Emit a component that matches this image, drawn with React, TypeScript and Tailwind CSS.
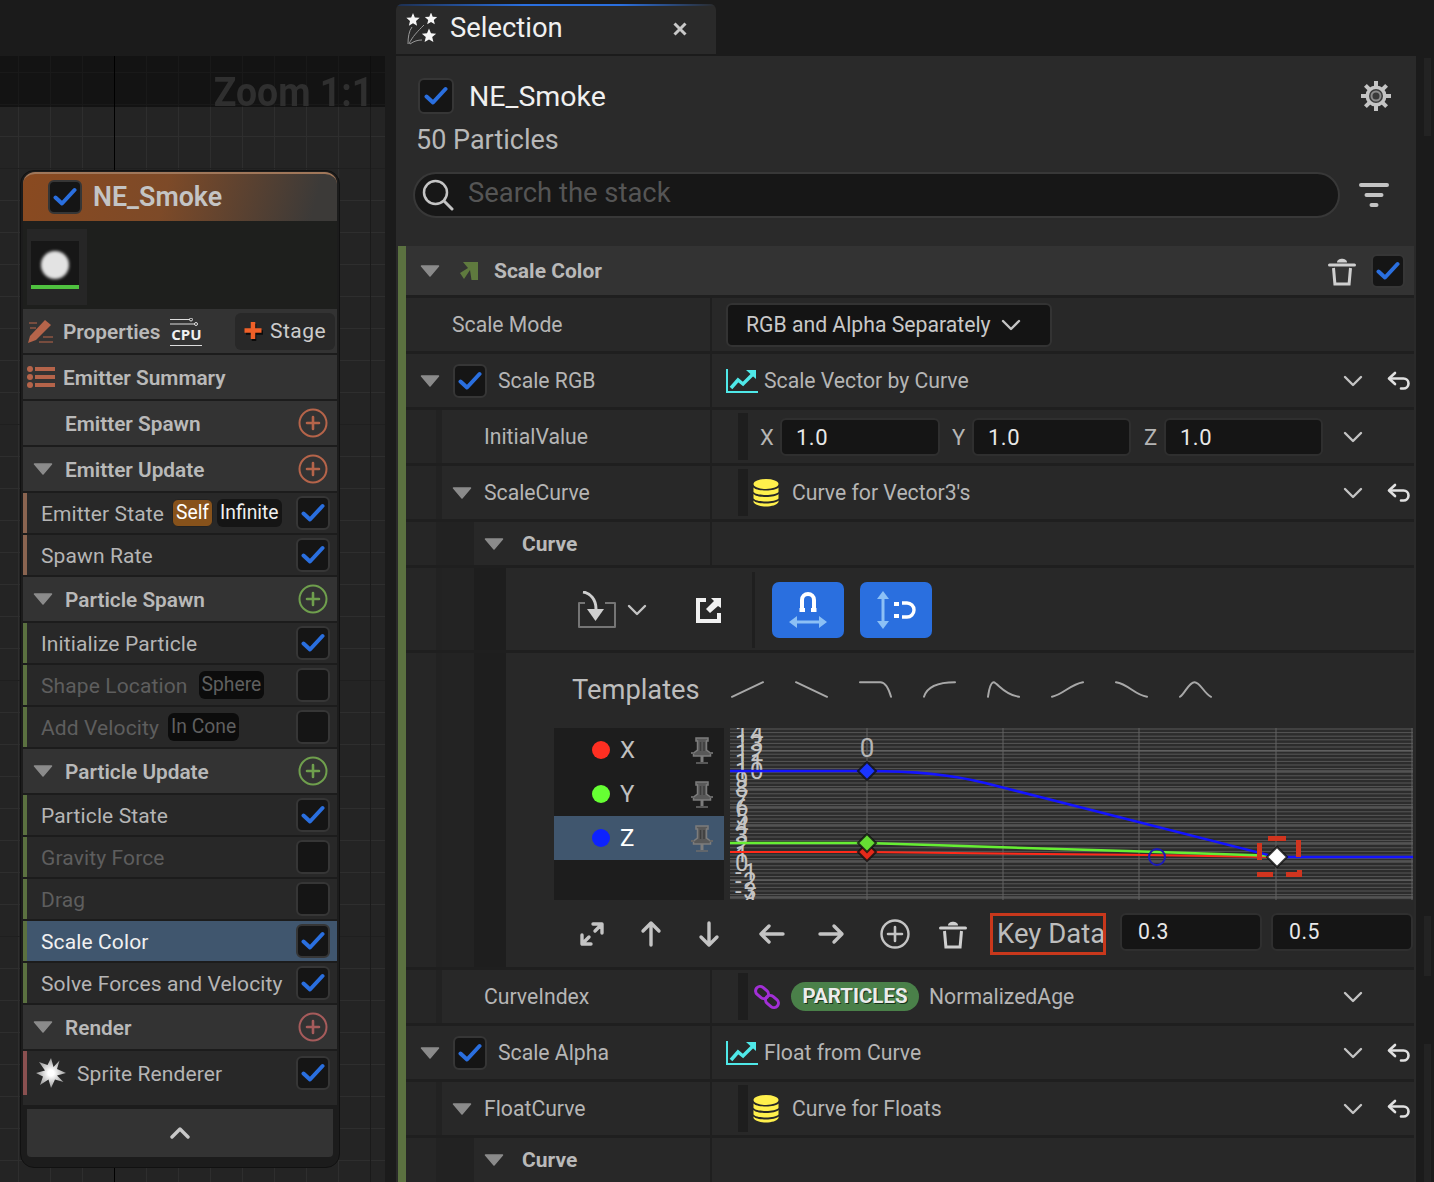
import React from "react";

const ROW_TEXT = "text-[21.2px] text-[#b5b5b5] pt-[1px] whitespace-nowrap";
const BOLD_TEXT = "text-[21px] font-bold text-[#b9b9b9] pt-[2px]";

const Tri = ({ className = "" }: { className?: string }) => (
  <svg width="20" height="12" viewBox="0 0 20 12" className={`shrink-0 ${className}`}>
    <path d="M1.5 1h17L10 11z" fill="#8b8b8b" stroke="#8b8b8b" strokeWidth="1.5" strokeLinejoin="round" />
  </svg>
);

const Check = ({ checked = true, size = 34 }: { checked?: boolean; size?: number }) => (
  <div
    className="shrink-0 flex items-center justify-center rounded-[6px] bg-[#151515] border-2 border-[#363636]"
    style={{ width: size, height: size }}
  >
    {checked && (
      <svg width="24" height="20" viewBox="0 0 24 20">
        <path d="M2.5 10.500l6.500 6L21.500 3" fill="none" stroke="#2a6fdf" strokeWidth="4" strokeLinecap="round" strokeLinejoin="round" />
      </svg>
    )}
  </div>
);

const PlusCircle = ({ color }: { color: string }) => (
  <svg width="30" height="30" viewBox="0 0 30 30" className="shrink-0">
    <circle cx="15" cy="15" r="13.500" fill="none" stroke={color} strokeWidth="2" />
    <path d="M15 9v12M9 15h12" stroke={color} strokeWidth="2.600" strokeLinecap="round" />
  </svg>
);

const Chevron = () => (
  <svg width="20" height="12" viewBox="0 0 20 12" className="shrink-0">
    <path d="M2 2l8 8 8-8" fill="none" stroke="#c4c4c4" strokeWidth="2.400" strokeLinecap="round" strokeLinejoin="round" />
  </svg>
);

const Undo = () => (
  <svg width="24" height="20" viewBox="0 0 24 20" className="shrink-0">
    <path d="M8 2L2 7.500 8 13" fill="none" stroke="#e0e0e0" strokeWidth="2.600" strokeLinecap="round" strokeLinejoin="round" />
    <path d="M3 7.500h13.500a4.800 4.800 0 0 1 0 10h-2.500" fill="none" stroke="#e0e0e0" strokeWidth="2.600" strokeLinecap="round" />
  </svg>
);

const Trash = () => (
  <svg width="28" height="30" viewBox="0 0 28 30" className="shrink-0">
    <path d="M1.500 9h25" stroke="#cfcfcf" strokeWidth="3" strokeLinecap="round" />
    <path d="M9 6.500c0-5 10-5 10 0z" fill="#cfcfcf" />
    <path d="M5.500 12l1.400 16h14.200l1.400-16" fill="none" stroke="#cfcfcf" strokeWidth="3" />
  </svg>
);

const CurveIcon = () => (
  <svg width="32" height="24" viewBox="0 0 32 24" className="shrink-0">
    <path d="M1 0v23h31" fill="none" stroke="#4fe8e8" strokeWidth="2" />
    <path d="M5 19l7-8 5 4L27 5" fill="none" stroke="#4fe8e8" strokeWidth="3.500" />
    <path d="M20 1h10v9z" fill="#4fe8e8" />
  </svg>
);

const Db = () => (
  <svg width="26" height="28" viewBox="0 0 26 28" className="shrink-0">
    <ellipse cx="13" cy="5" rx="12.500" ry="5" fill="#fff04c" />
    <path d="M.5 8.500c3 4 22 4 25 0v4.500c-3 4-22 4-25 0z" fill="#fff04c" />
    <path d="M.5 15c3 4 22 4 25 0v4.500c-3 4-22 4-25 0z" fill="#fff04c" />
    <path d="M.5 21.500c3 4 22 4 25 0v1.500c-3 6-22 6-25 0z" fill="#fff04c" />
  </svg>
);

const StripValue = () => <div className="w-[10px] h-[47px] shrink-0 ml-[26px] mr-[5px] bg-[#1e1e1e]" />;

const Row = ({
  indent = 0,
  left,
  right,
  h = "h-[53px]",
}: {
  indent?: number;
  left: React.ReactNode;
  right?: React.ReactNode;
  h?: string;
}) => (
  <div className={`flex ${h} bg-[#282828]`}>
    <div className="w-[304px] flex items-center shrink-0 bg-[#282828]">
      {indent > 0 && <div className="self-stretch w-[30px] bg-[#262626] shrink-0" />}
      {indent > 0 && <div className="self-stretch w-[6px] bg-[#222222] shrink-0" />}
      {indent > 1 && <div className="self-stretch w-[32px] bg-[#222222] shrink-0" />}
      {left}
    </div>
    <div className="w-[2px] bg-[#1f1f1f] shrink-0" />
    <div className="flex-1 flex items-center min-w-0">{right}</div>
  </div>
);

const Tail = ({ undo = false }: { undo?: boolean }) => (
  <div className="ml-auto flex items-center gap-[24px] pr-[3px]">
    <Chevron />
    <div className="w-[24px] flex justify-center">{undo && <Undo />}</div>
  </div>
);

const Vec = ({ l, w }: { l: string; w: string }) => (
  <>
    <span className="text-[#b5b5b5] text-[22px] w-[20px] shrink-0 pt-[1px]">{l}</span>
    <div className={`${w} h-[38px] shrink-0 flex items-center pl-[14px] bg-[#151515] border-2 border-[#2f2f2f] rounded-[6px] text-[22px] text-[#e8e8e8] tracking-[0.5px] pt-[1px]`}>
      1.0
    </div>
  </>
);

const Blue = ({ children }: { children: React.ReactNode }) => (
  <div className="w-[72px] h-[56px] rounded-[7px] bg-[#2a6fdf] flex items-center justify-center shrink-0">{children}</div>
);

function Graph() {
  const minor = Array.from({ length: 48 }, (_, i) => 729 + i * 3.6);
  const major = [751, 771, 789, 807, 825, 843, 861, 880, 897];
  const vs = [867, 1003, 1139, 1276, 1412];
  const labels = Array.from({ length: 19 }, (_, i) => 14 - i);
  const dia = (x: number, y: number, f: string, r = 9) => (
    <path d={`M${x} ${y - r}L${x + r} ${y}L${x} ${y + r}L${x - r} ${y}z`} fill={f} stroke="#101010" strokeWidth="2" strokeOpacity="0.8" />
  );
  return (
    <svg width="683" height="172" viewBox="730 728 683 172" className="block [font-family:Roboto,sans-serif]">
      <rect x="730" y="728" width="683" height="172" fill="#2c2c2c" />
      {minor.map((y) => (
        <line key={y} x1="730" x2="1413" y1={y} y2={y} stroke="#575757" strokeWidth="1" />
      ))}
      {major.map((y) => (
        <line key={y} x1="730" x2="1413" y1={y} y2={y} stroke="#6e6e6e" strokeWidth="1" />
      ))}
      {vs.map((x) => (
        <line key={x} x1={x} x2={x} y1="728" y2="900" stroke="#626262" strokeWidth="1" />
      ))}
      {labels.map((n) => (
        <text key={n} x="735" y={871 - n * 9.2} fontSize="24" letterSpacing="1.5" fill="#c4c4c4">
          {n}
        </text>
      ))}
      <text x="867" y="757" fontSize="26" fill="#b5b5b5" textAnchor="middle">0</text>
      <path d="M730 852H867C1000 853 1140 855 1276 857" fill="none" stroke="#ff2a1a" strokeWidth="2" />
      <path d="M730 843H867C1000 846 1140 852 1276 856" fill="none" stroke="#66ee33" strokeWidth="2.500" />
      <path d="M730 771H867C915 771 950 774 985 783L1276 857H1413" fill="none" stroke="#1414ff" strokeWidth="2.500" />
      {dia(867, 852, "#e62a1a")}
      {dia(867, 843, "#66dd33")}
      {dia(867, 771, "#1a35ff")}
      <circle cx="1157" cy="857" r="8" fill="none" stroke="#1a1ab8" strokeWidth="2" />
      {dia(1277, 857, "#ffffff", 10)}
      <g fill="#d1351f">
        <rect x="1268" y="836" width="18" height="5" />
        <rect x="1257" y="843" width="5" height="17" />
        <rect x="1296" y="840" width="5" height="17" />
        <rect x="1257" y="872" width="16" height="5" />
        <rect x="1286" y="872" width="16" height="5" />
        <rect x="1297" y="870" width="5" height="4" />
      </g>
    </svg>
  );
}

const Pin = () => (
  <svg width="22" height="27" viewBox="0 0 22 27" className="shrink-0">
    <path d="M5 1h12v3h-1.500v9l4 3v3H2.500v-3l4-3V4H5z" fill="#585858" stroke="#7c7c7c" strokeWidth="1.500" />
    <path d="M9.500 5v9M13 5v9" stroke="#3c3c3c" strokeWidth="1.500" />
    <path d="M11 19v6" stroke="#7c7c7c" strokeWidth="3" />
    <path d="M5 26h12" stroke="#6c6c6c" strokeWidth="1.500" />
    <path d="M0 16h3M19 16h3" stroke="#666" strokeWidth="2" />
  </svg>
);

const Legend = ({ c, l, sel = false }: { c: string; l: string; sel?: boolean }) => (
  <div className={`h-[44px] flex items-center pl-[38px] pr-[11px] ${sel ? "bg-[#40566e]" : ""}`}>
    <div className="w-[18px] h-[18px] rounded-full" style={{ background: c }} />
    <span className={`ml-[10px] text-[24px] ${sel ? "text-white" : "text-[#c0c0c0]"}`}>{l}</span>
    <div className="ml-auto">
      <Pin />
    </div>
  </div>
);

const templates = [
  "M1 17L33 2",
  "M1 2L33 17",
  "M1 2H22C28 2 31 10 33 17",
  "M1 17C4 7 14 2 33 2",
  "M1 17C2 10 4 2 7 2C12 4 18 15 33 17",
  "M1 17C12 15 20 4 33 2",
  "M1 2C14 4 20 15 33 17",
  "M1 17C6 14 10 2 16 2C22 2 26 14 33 17",
];

const Arrow = ({ d }: { d: string }) => (
  <svg width="30" height="30" viewBox="0 0 30 30" className="shrink-0">
    <path d={d} fill="none" stroke="#c4c4c4" strokeWidth="3.400" strokeLinecap="round" strokeLinejoin="round" />
  </svg>
);

function Stack() {
  return (
    <div className="flex flex-col gap-[3px] flex-1 bg-[#1f1f1f] min-w-0">
      <div className="h-[49px] flex items-center bg-[#333333] pl-[14px]">
        <Tri />
        <svg width="20" height="20" viewBox="0 0 20 20" className="ml-[19px]">
          <path d="M4 1H19V19H12.500L11 9L5 18L1 12L9 7Z" fill="#5f7a3e" />
        </svg>
        <span className={`ml-[15px] ${BOLD_TEXT}`}>Scale Color</span>
        <div className="ml-auto flex items-center gap-[15px] pr-[9px]">
          <Trash />
          <Check />
        </div>
      </div>

      <Row
        left={<span className={`ml-[46px] ${ROW_TEXT}`}>Scale Mode</span>}
        right={
          <div className="ml-[14px] w-[326px] h-[44px] bg-[#141414] border-2 border-[#333333] rounded-[6px] flex items-center pl-[18px] text-[21.2px] text-[#c8c8c8] pt-[1px]">
            RGB and Alpha Separately
            <div className="ml-[10px]">
              <Chevron />
            </div>
          </div>
        }
      />
      <Row
        left={
          <>
            <Tri className="ml-[14px]" />
            <div className="ml-[13px]">
              <Check />
            </div>
            <span className={`ml-[11px] ${ROW_TEXT}`}>Scale RGB</span>
          </>
        }
        right={
          <>
            <div className="ml-[14px]">
              <CurveIcon />
            </div>
            <span className={`ml-[6px] ${ROW_TEXT}`}>Scale Vector by Curve</span>
            <Tail undo />
          </>
        }
      />
      <Row
        indent={1}
        left={<span className={`ml-[42px] ${ROW_TEXT}`}>InitialValue</span>}
        right={
          <>
            <StripValue />
            <div className="ml-[7px] flex items-center">
              <Vec l="X" w="w-[160px]" />
              <div className="w-[12px]" />
              <Vec l="Y" w="w-[159px]" />
              <div className="w-[13px]" />
              <Vec l="Z" w="w-[159px]" />
            </div>
            <Tail />
          </>
        }
      />
      <Row
        indent={1}
        left={
          <>
            <Tri className="ml-[10px]" />
            <span className={`ml-[12px] ${ROW_TEXT}`}>ScaleCurve</span>
          </>
        }
        right={
          <>
            <StripValue />
            <Db />
            <span className={`ml-[13px] ${ROW_TEXT}`}>Curve for Vector3's</span>
            <Tail undo />
          </>
        }
      />
      <Row
        indent={2}
        h="h-[43px]"
        left={
          <>
            <Tri className="ml-[10px]" />
            <span className={`ml-[18px] ${BOLD_TEXT}`}>Curve</span>
          </>
        }
      />

      <div className="flex h-[82px] bg-[#282828]">
        <div className="w-[30px] bg-[#262626]" />
        <div className="w-[6px] bg-[#222222]" />
        <div className="w-[32px] bg-[#232323]" />
        <div className="w-[32px] bg-[#1e1e1e]" />
        <div className="flex items-center flex-1 pt-[2px]">
          <svg width="40" height="38" viewBox="0 0 40 38" className="ml-[71px]">
            <path d="M8 12H2v24h36V12h-10" fill="none" stroke="#757575" strokeWidth="2" strokeLinejoin="round" />
            <path d="M6 1c7 1 13 7 13 17" fill="none" stroke="#cfcfcf" strokeWidth="3" />
            <path d="M10 18h17l-8.500 12z" fill="#cfcfcf" />
          </svg>
          <div className="ml-[10px]">
            <Chevron />
          </div>
          <svg width="26" height="26" viewBox="0 0 26 26" className="ml-[49px]">
            <path d="M10 3H2v21h21v-8" fill="none" stroke="#f0f0f0" strokeWidth="4" />
            <path d="M15 1h10v10l-3-2-8 7-4-4 8-8z" fill="#f0f0f0" />
          </svg>
          <div className="w-[3px] h-[76px] bg-[#1f1f1f] ml-[30px]" />
          <div className="ml-[17px]">
            <Blue>
              <svg width="40" height="38" viewBox="0 0 40 38">
                <path d="M14 18V9a6 6 0 0 1 12 0v9" fill="none" stroke="#fff" strokeWidth="4" />
                <path d="M11.500 17h5.500v4h-5.500zM23 17h5.500v4h-5.500z" fill="#fff" />
                <path d="M6 31h28" stroke="#8cc0f5" strokeWidth="3" />
                <path d="M1 31l8-6v12zM39 31l-8-6v12z" fill="#8cc0f5" />
              </svg>
            </Blue>
          </div>
          <div className="ml-[16px]">
            <Blue>
              <svg width="40" height="40" viewBox="0 0 40 40">
                <path d="M7 6v28" stroke="#8cc0f5" strokeWidth="3" />
                <path d="M7 1l6 8H1zM7 39l6-8H1z" fill="#8cc0f5" />
                <path d="M26 13h5a7 7 0 0 1 0 14h-5" fill="none" stroke="#fff" strokeWidth="3.400" />
                <path d="M18 12h5v4h-5zM18 24h5v4h-5z" fill="#fff" />
              </svg>
            </Blue>
          </div>
        </div>
      </div>

      <div className="flex h-[314px] bg-[#282828]">
        <div className="w-[30px] bg-[#262626]" />
        <div className="w-[6px] bg-[#222222]" />
        <div className="w-[32px] bg-[#232323]" />
        <div className="w-[32px] bg-[#1e1e1e]" />
        <div className="flex-1 flex flex-col min-w-0">
          <div className="h-[75px] flex items-center pl-[66px] pb-[3px]">
            <span className="text-[27.3px] text-[#bdbdbd] w-[159px] pt-[3px]">Templates</span>
            {templates.map((d, i) => (
              <svg key={i} width="33" height="19" viewBox="0 0 34 19" className="mr-[31px] shrink-0">
                <path d={d} fill="none" stroke="#a8a8a8" strokeWidth="2" strokeLinecap="round" />
              </svg>
            ))}
          </div>
          <div className="flex ml-[48px]">
            <div className="w-[170px] h-[172px] bg-[#1d1d1d] shrink-0">
              <Legend c="#ff2f22" l="X" />
              <Legend c="#66ff33" l="Y" />
              <Legend c="#0d22ff" l="Z" sel />
            </div>
            <div className="ml-[6px]">
              <Graph />
            </div>
          </div>
          <div className="flex items-center h-[36px] mt-[14px]">
            <div className="flex items-center mt-[4px]">
              <div className="ml-[71px] w-[30px]">
                <Arrow d="M5 25L12 18M18 12L25 5M16 5h9v9M5 16v9h9" />
              </div>
              <div className="ml-[29px]">
                <Arrow d="M15 26V4M7 12l8-8 8 8" />
              </div>
              <div className="ml-[28px]">
                <Arrow d="M15 4v22M7 18l8 8 8-8" />
              </div>
              <div className="ml-[33px]">
                <Arrow d="M26 15H4M12 7l-8 8 8 8" />
              </div>
              <div className="ml-[29px]">
                <Arrow d="M4 15h22M18 7l8 8-8 8" />
              </div>
              <svg width="30" height="30" viewBox="0 0 30 30" className="ml-[34px]">
                <circle cx="15" cy="15" r="13.500" fill="none" stroke="#c4c4c4" strokeWidth="2.400" />
                <path d="M15 8v14M8 15h14" stroke="#c4c4c4" strokeWidth="2.600" strokeLinecap="round" />
              </svg>
              <div className="ml-[29px]">
                <Trash />
              </div>
              <div className="ml-[23px] w-[116px] h-[42px] border-[3px] border-[#c8381c] flex items-center pl-[4px] text-[27.5px] text-[#bdbdbd] whitespace-nowrap overflow-hidden">
                Key Data
              </div>
            </div>
            <div className="ml-[14px] w-[142px] h-[38px] bg-[#151515] border-2 border-[#2f2f2f] rounded-[6px] flex items-center pl-[16px] text-[21.2px] text-[#e8e8e8] tracking-[0.5px]">
              0.3
            </div>
            <div className="ml-[9px] w-[142px] h-[38px] bg-[#151515] border-2 border-[#2f2f2f] rounded-[6px] flex items-center pl-[16px] text-[21.2px] text-[#e8e8e8] tracking-[0.5px]">
              0.5
            </div>
          </div>
        </div>
      </div>

      <Row
        indent={1}
        left={<span className={`ml-[42px] ${ROW_TEXT}`}>CurveIndex</span>}
        right={
          <>
            <StripValue />
            <svg width="26" height="26" viewBox="0 0 26 26" className="ml-[1px]">
              <rect x="1" y="4" width="14" height="9" rx="4.500" transform="rotate(40 8 8.500)" fill="none" stroke="#a22fd6" strokeWidth="3" />
              <rect x="11" y="13" width="14" height="9" rx="4.500" transform="rotate(40 18 17.500)" fill="none" stroke="#a22fd6" strokeWidth="3" />
            </svg>
            <div className="ml-[11px] w-[128px] h-[29px] rounded-full bg-[#4a8049] flex items-center justify-center text-[20.5px] font-bold text-[#ececec] [text-shadow:1px_1px_0_#16331a]">
              PARTICLES
            </div>
            <span className={`ml-[10px] ${ROW_TEXT}`}>NormalizedAge</span>
            <Tail />
          </>
        }
      />
      <Row
        left={
          <>
            <Tri className="ml-[14px]" />
            <div className="ml-[13px]">
              <Check />
            </div>
            <span className={`ml-[11px] ${ROW_TEXT}`}>Scale Alpha</span>
          </>
        }
        right={
          <>
            <div className="ml-[14px]">
              <CurveIcon />
            </div>
            <span className={`ml-[6px] ${ROW_TEXT}`}>Float from Curve</span>
            <Tail undo />
          </>
        }
      />
      <Row
        indent={1}
        left={
          <>
            <Tri className="ml-[10px]" />
            <span className={`ml-[12px] ${ROW_TEXT}`}>FloatCurve</span>
          </>
        }
        right={
          <>
            <StripValue />
            <Db />
            <span className={`ml-[13px] ${ROW_TEXT}`}>Curve for Floats</span>
            <Tail undo />
          </>
        }
      />
      <Row
        indent={2}
        h="h-[44px]"
        left={
          <>
            <Tri className="ml-[10px]" />
            <span className={`ml-[18px] ${BOLD_TEXT}`}>Curve</span>
          </>
        }
      />
    </div>
  );
}

const HeadRow = ({
  label,
  color,
  tri = true,
}: {
  label: string;
  color: string;
  tri?: boolean;
}) => (
  <div className="h-[44px] flex items-center bg-[#333333] pl-[10px] pr-[9px]">
    {tri ? <Tri /> : <div className="w-[20px]" />}
    <span className="ml-[12px] text-[20.8px] font-semibold text-[#b9b9b9] pt-[3px]">{label}</span>
    <div className="ml-auto">
      <PlusCircle color={color} />
    </div>
  </div>
);

const Chip = ({ t, dim = false, self = false }: { t: string; dim?: boolean; self?: boolean }) => (
  <span
    className={`h-[28px] flex items-center px-[3px] rounded-[6px] text-[19.3px] ${
      self ? "bg-[#87521b] text-white border border-[#222222]" : dim ? "bg-[#0c0c0c] text-[#5f5f5f]" : "bg-[#151515] text-[#f0f0f0]"
    }`}
  >
    {t}
  </span>
);

const ModRow = ({
  label,
  bar,
  on = true,
  sel = false,
  children,
  icon,
  h = "h-[40px]",
}: {
  label: string;
  bar: string;
  on?: boolean;
  sel?: boolean;
  children?: React.ReactNode;
  icon?: React.ReactNode;
  h?: string;
}) => (
  <div className={`${h} flex items-center ${sel ? "bg-[#40566e]" : "bg-[#282828]"} pr-[7px]`}>
    <div className="w-[4px] self-stretch shrink-0" style={{ background: bar }} />
    {icon ?? <div className="w-[14px]" />}
    <span className={`text-[21px] tracking-[0.12px] pt-[3px] whitespace-nowrap ${sel ? "text-[#f0f0f0]" : on ? "text-[#b5b5b5]" : "text-[#5e5e5e]"}`}>{label}</span>
    {children}
    <div className="ml-auto">
      <Check checked={on} />
    </div>
  </div>
);

const EM = "#8a6450";
const PA = "#5b7140";
const RE = "#8a5050";

function Node() {
  return (
    <div className="absolute left-[20px] top-[114px] w-[320px] h-[998px] rounded-[14px] bg-[#1c1c1c] border border-[#111111] px-[2px] pt-[1px] flex flex-col gap-[2px] [font-family:Roboto,sans-serif] overflow-hidden">
      <div className="h-[49px] rounded-t-[12px] shrink-0 flex items-center pl-[25px] pb-[1px] bg-[linear-gradient(105deg,#8a4a20_0%,#7d4a28_45%,#3c3a38_92%)] border-t-2 border-[#a0775a]">
        <Check />
        <span className="ml-[11px] text-[26.8px] font-semibold text-[#c4c4c4]">NE_Smoke</span>
      </div>
      <div className="h-[88px] -mt-[2px] shrink-0 bg-[#1e1f1d] pl-[4px] pt-[8px]">
        <div className="w-[60px] h-[76px] bg-[#262626] pl-[4px] pt-[12px]">
          <div className="w-[48px] h-[48px] bg-[#171717] flex flex-col items-center relative">
            <div className="w-[28px] h-[28px] rounded-full mt-[10px] bg-[#e3e3e3] blur-[1.5px]" />
            <div className="absolute bottom-0 w-full h-[4px] bg-[#4fc13f]" />
          </div>
        </div>
      </div>
      <div className="h-[44px] -mt-[2px] shrink-0 flex items-center bg-[#333333] pl-[4px] pr-[2px]">
        <svg width="28" height="28" viewBox="0 0 28 28" className="shrink-0">
          <path d="M1 26l2-7L18 3l6 5L9 23z" fill="#b5644a" />
          <path d="M2 6h8M3 11h6M16 20h10M12 25h14" stroke="#b5644a" strokeWidth="1.500" opacity="0.7" />
        </svg>
        <span className="ml-[8px] text-[20.8px] font-semibold text-[#b9b9b9] pt-[3px]">Properties</span>
        <div className="ml-[10px] w-[32px] flex flex-col items-center pt-[2px]">
          <svg width="32" height="9" viewBox="0 0 32 9" className="block">
            <path d="M0 1.500h20M0 6h25" stroke="#ddd" strokeWidth="1.200" />
            <circle cx="21" cy="1.500" r="1.500" fill="none" stroke="#ddd" />
            <circle cx="26" cy="6" r="1.500" fill="none" stroke="#ddd" />
          </svg>
          <span className="text-[15px] leading-[15px] font-bold text-[#f0f0f0] [font-family:'Open_Sans',sans-serif]">CPU</span>
          <div className="w-full h-[1px] bg-[#ddd] mt-[3px]" />
        </div>
        <div className="ml-auto w-[100px] h-[37px] bg-[#282828] rounded-[6px] flex items-center pl-[8px]">
          <svg width="21" height="21" viewBox="0 0 21 21">
            <path d="M11 3v17M3 11.500h17" stroke="#000" strokeWidth="4.500" opacity="0.7" />
            <path d="M10 1v17M1.500 9.500h17" stroke="#f06028" strokeWidth="4.500" />
          </svg>
          <span className="ml-[6px] text-[21px] text-[#cccccc] tracking-[0.5px] pt-[2px]">Stage</span>
        </div>
      </div>
      <div className="h-[44px] shrink-0 flex items-center bg-[#333333] pl-[4px]">
        <svg width="28" height="22" viewBox="0 0 28 22" className="shrink-0">
          <g fill="#b5644a">
            <circle cx="3" cy="3" r="3" />
            <circle cx="3" cy="11" r="3" />
            <circle cx="3" cy="19" r="3" />
            <rect x="8" y="1" width="20" height="4" />
            <rect x="8" y="9" width="20" height="4" />
            <rect x="8" y="17" width="20" height="4" />
          </g>
        </svg>
        <span className="ml-[8px] text-[20.8px] font-semibold text-[#b9b9b9] pt-[3px]">Emitter Summary</span>
      </div>
      <HeadRow label="Emitter Spawn" color="#b5644a" tri={false} />
      <HeadRow label="Emitter Update" color="#b5644a" />
      <ModRow label="Emitter State" bar={EM}>
        <span className="ml-[8px] flex gap-[4px]">
          <Chip t="Self" self />
          <Chip t="Infinite" />
        </span>
      </ModRow>
      <ModRow label="Spawn Rate" bar={EM} />
      <HeadRow label="Particle Spawn" color="#6f9f4d" />
      <ModRow label="Initialize Particle" bar={PA} />
      <ModRow label="Shape Location" bar={PA} on={false}>
        <span className="ml-[11px]">
          <Chip t="Sphere" dim />
        </span>
      </ModRow>
      <ModRow label="Add Velocity" bar={PA} on={false}>
        <span className="ml-[9px]">
          <Chip t="In Cone" dim />
        </span>
      </ModRow>
      <HeadRow label="Particle Update" color="#6f9f4d" />
      <ModRow label="Particle State" bar={PA} />
      <ModRow label="Gravity Force" bar={PA} on={false} />
      <ModRow label="Drag" bar={PA} on={false} />
      <ModRow label="Scale Color" bar={PA} sel />
      <ModRow label="Solve Forces and Velocity" bar={PA} />
      <HeadRow label="Render" color="#a65b5b" />
      <ModRow
        label="Sprite Renderer"
        bar={RE}
        h="h-[44px]"
        icon={
          <svg width="32" height="32" viewBox="0 0 32 32" className="ml-[8px] mr-[10px] shrink-0">
            <defs>
              <radialGradient id="sp">
                <stop offset="0.2" stopColor="#fff" />
                <stop offset="1" stopColor="#999" />
              </radialGradient>
            </defs>
            <path
              d="M16 1l2.500 9 6-6.500-2.500 8.500L31 16l-9 2.500 6.500 6.500-8.500-2.500L16 31l-2.500-8.500L5 28l3-8.500L1 16l9-2.500L4 5l8.500 3z"
              fill="url(#sp)"
            />
          </svg>
        }
      />
      <div className="h-[10px] -mt-[2px] shrink-0 bg-[#282828]" />
      <div className="mx-[4px] mt-[2px] h-[48px] shrink-0 bg-[#333333] rounded-b-[4px] flex items-center justify-center">
        <svg width="20" height="12" viewBox="0 0 20 12">
          <path d="M2 10l8-8 8 8" fill="none" stroke="#c8c8c8" strokeWidth="3.400" strokeLinecap="round" strokeLinejoin="round" />
        </svg>
      </div>
    </div>
  );
}

const star = (cx: number, cy: number, r: number) =>
  Array.from({ length: 10 }, (_, i) => {
    const a = -Math.PI / 2 + (i * Math.PI) / 5;
    const rr = i % 2 ? r * 0.45 : r;
    return `${i ? "L" : "M"}${(cx + rr * Math.cos(a)).toFixed(2)} ${(cy + rr * Math.sin(a)).toFixed(2)}`;
  }).join("") + "z";

export default function App() {
  return (
    <div className="w-[1434px] h-[1182px] flex overflow-hidden bg-[#1b1b1b] [font-family:Roboto,sans-serif]">
      <div className="w-[396px] shrink-0 flex flex-col">
        <div className="h-[56px] shrink-0" />
        <div className="relative flex-1 w-[385px] overflow-hidden bg-[#242424] bg-[image:linear-gradient(to_right,#1a1a1a_1px,transparent_1px),linear-gradient(to_bottom,#1f1f1f_1px,transparent_1px),linear-gradient(to_right,#2e2e2e_1px,transparent_1px),linear-gradient(to_bottom,#2e2e2e_1px,transparent_1px)] bg-[size:256px_256px,256px_256px,32px_32px,32px_32px] bg-[position:114px_0,0_112px,18px_0,0_16px]">
          <div className="absolute left-0 top-0 w-full h-[51px] bg-black/45" />
          <div className="absolute left-[114px] top-0 bottom-0 w-[1px] bg-black" />
          <div className="absolute right-[12px] top-[11px] text-[41px] leading-[50px] font-bold text-[#2f2f2f] whitespace-nowrap origin-right scale-x-[0.91]">
            Zoom 1:1
          </div>
          <Node />
        </div>
      </div>

      <div className="w-[1020px] shrink-0 flex flex-col">
        <div className="h-[56px] shrink-0 pt-[4px]">
          <div className="relative w-[320px] h-[50px] bg-[#2a2a2a] rounded-t-[6px] flex items-center pl-[10px] overflow-hidden">
            <div className="absolute left-0 right-0 top-0 h-[2px] bg-[linear-gradient(90deg,#1d2f50_0%,#2a6fdf_40%,#2a6fdf_70%,#2a2a2a_100%)]" />
            <svg width="33" height="32" viewBox="0 0 33 32" className="shrink-0">
              <path d={star(7, 7, 7) + star(25, 6, 6.500) + star(23, 23, 7.500)} fill="#f6f6f6" />
              <path d="M2 31C2 24 3 18 6 14M3 31C6 24 12 18 18 12M4 31C8 28 12 27 16 27" fill="none" stroke="#9a9a9a" strokeWidth="1" />
            </svg>
            <span className="ml-[11px] text-[27.4px] text-[#f0f0f0]">Selection</span>
            <svg width="14" height="14" viewBox="0 0 14 14" className="ml-[110px]">
              <path d="M1.500 1.500l11 11M12.500 1.500l-11 11" stroke="#c8c8c8" strokeWidth="3" />
            </svg>
          </div>
        </div>
        <div className="flex-1 bg-[#2a2a2a] flex flex-col min-h-0">
          <div className="h-[190px] shrink-0 pt-[22px]">
            <div className="flex items-center pl-[22px] pr-[24px] h-[36px]">
              <Check size={36} />
              <span className="ml-[15px] text-[28.5px] text-[#f0f0f0] pt-[2px]">NE_Smoke</span>
              <svg width="32" height="32" viewBox="0 0 32 32" className="ml-auto">
                <g stroke="#c4c4c4" strokeWidth="4">
                  <path d="M16 1v6M16 25v6M1 16h6M25 16h6M5.400 5.400l4.300 4.300M22.300 22.300l4.300 4.300M26.600 5.400l-4.300 4.300M9.700 22.300l-4.300 4.300" />
                </g>
                <circle cx="16" cy="16" r="10.500" fill="#c4c4c4" />
                <circle cx="16" cy="16" r="7" fill="#3a3a3a" />
                <circle cx="16" cy="16" r="4.500" fill="#3a3a3a" stroke="#8a8a8a" strokeWidth="2" />
              </svg>
            </div>
            <div className="pl-[20px] mt-[8px] h-[34px] leading-[36px] text-[27px] text-[#b8b8b8]">50 Particles</div>
            <div className="flex items-center mt-[16px]">
              <div className="ml-[17px] w-[927px] h-[46px] rounded-full bg-[#171717] border-2 border-[#383838] flex items-center pl-[7px]">
                <svg width="32" height="32" viewBox="0 0 32 32">
                  <circle cx="13.500" cy="13.500" r="11.500" fill="none" stroke="#c4c4c4" strokeWidth="2.500" />
                  <path d="M22 22l8 8" stroke="#c4c4c4" strokeWidth="3" strokeLinecap="round" />
                </svg>
                <span className="ml-[14px] text-[27.4px] text-[#555555] pb-[3px]">Search the stack</span>
              </div>
              <svg width="30" height="24" viewBox="0 0 30 24" className="ml-[19px]">
                <path d="M2 2h26M7.500 12h15M12.500 22h5" stroke="#c4c4c4" strokeWidth="4" strokeLinecap="round" />
              </svg>
            </div>
          </div>
          <div className="flex-1 flex pl-[2px] pr-[2px] min-h-0 overflow-hidden">
            <div className="w-[8px] shrink-0 bg-[#5b7140]" />
            <Stack />
          </div>
        </div>
      </div>

      <div className="relative flex-1">
        <div className="absolute left-[8px] top-[58px] w-[7px] h-[78px] bg-[#232323]" />
        <div className="absolute left-[8px] top-[916px] w-[7px] h-[60px] bg-[#232323]" />
        <div className="absolute left-[8px] top-[1044px] w-[7px] h-[138px] bg-[#232323]" />
      </div>
    </div>
  );
}
